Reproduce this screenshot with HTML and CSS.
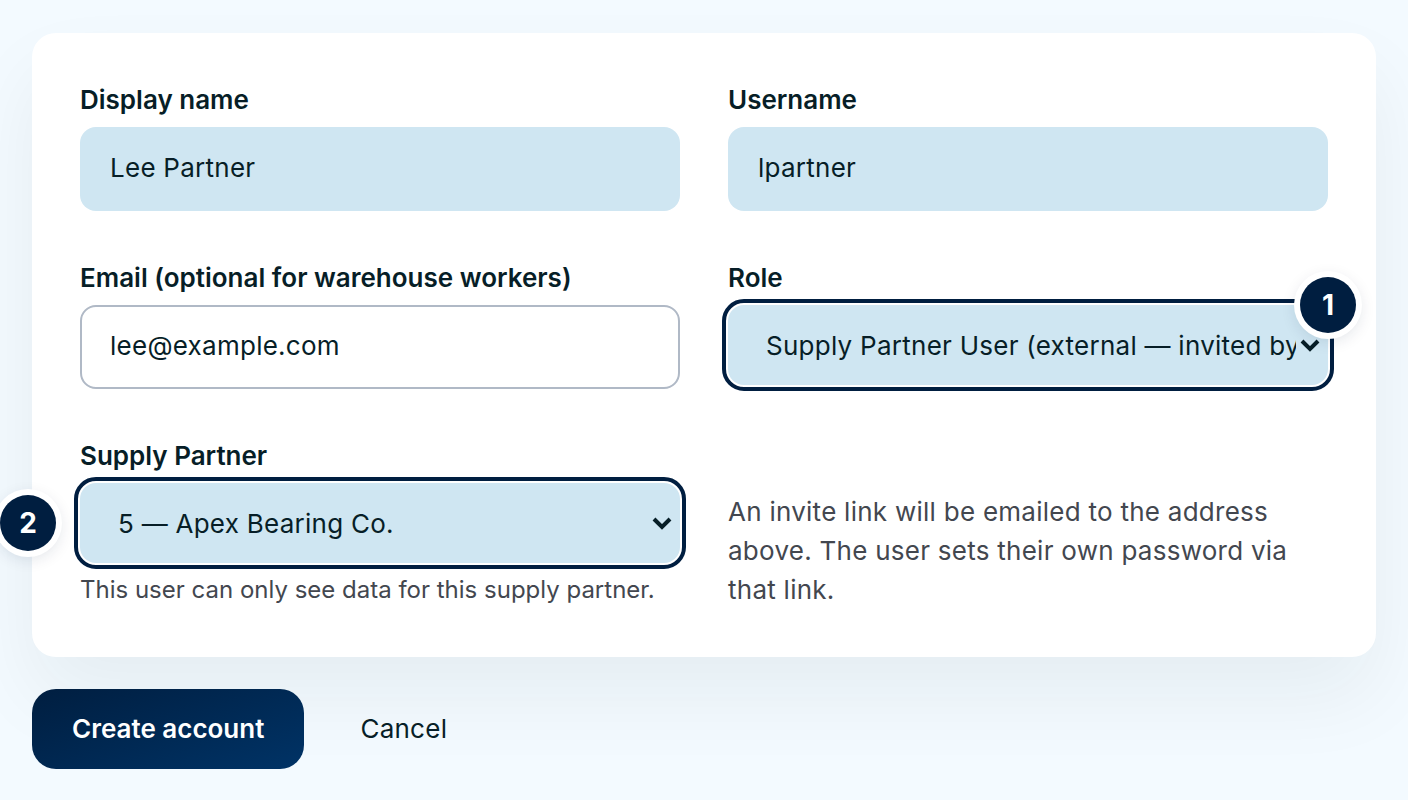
FILE: index.html
```html
<!DOCTYPE html>
<html lang="en">
<head>
<meta charset="utf-8">
<title>Create account</title>
<link rel="stylesheet" href="styles.css">
</head>
<body>
<form class="page">
  <section class="card">
    <div class="field">
      <label class="label" for="display">Display name</label>
      <input class="control filled" id="display" type="text" value="Lee Partner">
    </div>
    <div class="field">
      <label class="label" for="username">Username</label>
      <input class="control filled" id="username" type="text" value="lpartner">
    </div>
    <div class="field">
      <label class="label" for="email">Email (optional for warehouse workers)</label>
      <input class="control outlined" id="email" type="email" value="lee@example.com">
    </div>
    <div class="field">
      <label class="label" for="role">Role</label>
      <div class="picker">
        <select class="control filled select" id="role"><option>Supply Partner User (external — invited by email)</option></select>
        <svg class="chevron" viewBox="0 0 20 14" aria-hidden="true"><path d="M2 2l8 8 8-8"/></svg>
        <span class="badge badge-corner">1</span>
      </div>
    </div>
    <div class="field">
      <label class="label" for="partner">Supply Partner</label>
      <div class="picker">
        <select class="control filled select" id="partner"><option>5 — Apex Bearing Co.</option></select>
        <svg class="chevron" viewBox="0 0 20 14" aria-hidden="true"><path d="M2 2l8 8 8-8"/></svg>
        <span class="badge badge-side">2</span>
      </div>
      <p class="hint">This user can only see data for this supply partner.</p>
    </div>
    <p class="note">An invite link will be emailed to the address above. The user sets their own password via that link.</p>
  </section>
  <div class="actions">
    <button class="button primary" type="submit">Create account</button>
    <button class="button plain" type="button">Cancel</button>
  </div>
</form>
</body>
</html>
```
FILE: styles.css
```css
* { box-sizing: border-box; }
body {
  margin: 0;
  min-height: 100vh;
  background: #f3faff;
  color: #071e27;
  font-family: Inter, "Liberation Sans", sans-serif;
  font-size: 26px;
  overflow: hidden;
}
.page { padding: 33px 32px 32px; }
.card {
  display: grid;
  grid-template-columns: 1fr 1fr;
  gap: 48px;
  padding: 48px;
  border-radius: 24px;
  background: #fff;
  box-shadow: 0 40px 80px rgba(7, 30, 39, 0.06);
}
.field { display: flex; flex-direction: column; min-width: 0; }
.label {
  margin-bottom: 8px;
  font-weight: 600;
  line-height: 38px;
}
.control {
  display: block;
  width: 100%;
  height: 84px;
  margin: 0;
  padding: 0 30px 3px;
  border: 0;
  border-radius: 16px;
  color: inherit;
  font: inherit;
  letter-spacing: 0.01em;
  outline: none;
}
.filled { background: #cfe6f2; }
.outlined { border: 2px solid #b0b9c6; padding: 0 28px 3px; background: #fff; }
.picker { position: relative; }
.select {
  height: 80px;
  appearance: none;
  padding: 0 32px 0 38px;
  outline: 4px solid #001e40;
  outline-offset: 2px;
}
.chevron {
  position: absolute;
  right: 8px;
  top: 34px;
  width: 20px;
  height: 14px;
  fill: none;
  stroke: #071e27;
  stroke-width: 4;
  pointer-events: none;
}
.badge {
  position: absolute;
  display: grid;
  place-items: center;
  width: 56px;
  height: 56px;
  border-radius: 50%;
  background: #001e40;
  color: #fff;
  font-size: 28px;
  font-weight: 700;
  box-shadow: 0 0 0 6px #fff, 0 4px 16px 4px rgba(0, 30, 64, 0.12);
}
.badge-corner { top: -28px; right: -28px; }
.badge-side { top: 12px; left: -80px; }
.hint {
  margin: 8px 0 0;
  color: #43474f;
  font-size: 24px;
  line-height: 38px;
}
.note {
  align-self: end;
  margin: 0;
  color: #43474f;
  letter-spacing: 0.01em;
  line-height: 39px;
}
.actions { display: flex; gap: 16px; margin-top: 32px; }
.button {
  height: 80px;
  padding: 0 40px 2px;
  border: 0;
  border-radius: 24px;
  color: inherit;
  font: inherit;
}
.primary {
  background: linear-gradient(160deg, #001e40, #003366);
  color: #fff;
  font-weight: 600;
}
.plain { background: transparent; letter-spacing: 0.01em; }
```
